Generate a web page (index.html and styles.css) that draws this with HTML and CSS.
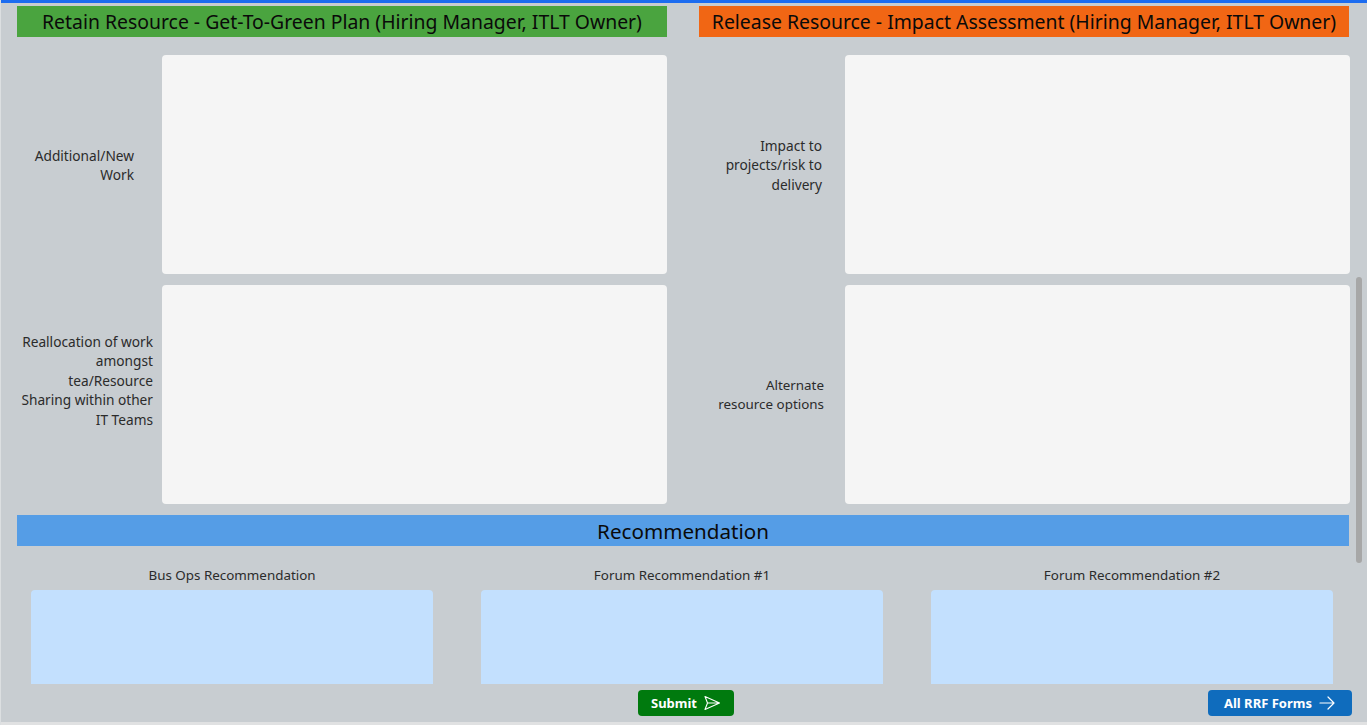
FILE: index.html
```html
<!DOCTYPE html>
<html>
<head>
<meta charset="utf-8">
<link rel="stylesheet" href="styles.css">
</head>
<body>
<div class="page">
  <div class="topbar"></div>
  <div class="columns">
    <section class="col">
      <div class="head head-green">Retain Resource - Get-To-Green Plan (Hiring Manager, ITLT Owner)</div>
      <div class="row">
        <div class="label l1">Additional/New<br>Work</div>
        <div class="box"></div>
      </div>
      <div class="row">
        <div class="label l2">Reallocation of work<br>amongst<br>tea/Resource<br>Sharing within other<br>IT Teams</div>
        <div class="box"></div>
      </div>
    </section>
    <section class="col">
      <div class="head head-orange">Release Resource - Impact Assessment (Hiring Manager, ITLT Owner)</div>
      <div class="row">
        <div class="label r1">Impact to<br>projects/risk to<br>delivery</div>
        <div class="box"></div>
      </div>
      <div class="row">
        <div class="label r2">Alternate<br>resource options</div>
        <div class="box"></div>
      </div>
    </section>
  </div>
  <div class="rec-bar">Recommendation</div>
  <div class="recs">
    <div class="rec">
      <div class="rec-label">Bus Ops Recommendation</div>
      <div class="rec-box"></div>
    </div>
    <div class="rec">
      <div class="rec-label">Forum Recommendation #1</div>
      <div class="rec-box"></div>
    </div>
    <div class="rec">
      <div class="rec-label">Forum Recommendation #2</div>
      <div class="rec-box"></div>
    </div>
  </div>
  <div class="actions">
    <button class="btn btn-submit">Submit
      <svg width="18" height="18" viewBox="0 0 18 18" fill="none" stroke="#fff" stroke-width="1.1" stroke-linejoin="round"><path d="M2 2.5 L16.5 9 L2 15.5 L4.5 9 Z M4.5 9 H16.5"/></svg>
    </button>
    <button class="btn btn-all">All RRF Forms
      <svg width="18" height="18" viewBox="0 0 18 18" fill="none" stroke="#fff" stroke-width="1.2" stroke-linecap="round" stroke-linejoin="round"><path d="M2 9 H16 M10 3 L16 9 L10 15"/></svg>
    </button>
  </div>
  <div class="scrollbar"></div>
  <div class="bottomline"></div>
</div>
</body>
</html>
```
FILE: styles.css
```css
* { box-sizing: border-box; }
html, body { margin: 0; padding: 0; }
body {
  font-family: "Noto Sans", "Open Sans", sans-serif;
  background: #c8cdd1;
  color: #000;
}
.page {
  position: relative;
  width: 1367px;
  height: 725px;
  overflow: hidden;
  background: #c8cdd1;
  border-left: 1px solid #dcdfe1;
}
.topbar {
  height: 3px;
  background: #1c6cf0;
}
.columns {
  display: flex;
  gap: 32px;
  padding: 3px 0 0 16px;
}
.col {
  width: 650px;
  display: flex;
  flex-direction: column;
}
.col:last-child .box { margin-right: -1px; }
.head {
  height: 31px;
  line-height: 32px;
  text-align: center;
  font-size: 19.4px;
  color: #0a0a0a;
  white-space: nowrap;
}
.head-green { background: #4aa43f; }
.head-orange { background: #f16614; }
.row {
  display: flex;
  justify-content: flex-end;
  align-items: center;
  margin-top: 11px;
}
.col .row:nth-child(2) { margin-top: 18px; }
.label {
  font-size: 13.7px;
  line-height: 19.5px;
  color: #2b2b2b;
  text-align: right;
  padding-top: 1px;
}
.l1 { margin-right: 28px; }
.l2 { margin-right: 9px; margin-bottom: 29px; }
.r1 { margin-right: 23px; }
.r2 { margin-right: 21px; font-size: 13.4px; }
.box {
  width: 505px;
  height: 219px;
  background: #f5f5f5;
  border-radius: 4px;
}
.rec-bar {
  margin: 11px 0 0 16px;
  width: 1332px;
  height: 31px;
  line-height: 32px;
  background: #559de6;
  text-align: center;
  font-size: 20.6px;
  color: #0a0a0a;
}
.recs {
  display: flex;
  gap: 48px;
  padding-left: 30px;
  margin-top: 19px;
}
.rec {
  width: 402px;
  display: flex;
  flex-direction: column;
  align-items: center;
}
.rec-label {
  font-size: 13.4px;
  line-height: 20px;
  color: #2b2b2b;
  height: 25px;
}
.rec-box {
  width: 402px;
  height: 94px;
  background: #c3e0fe;
  border-radius: 4px 4px 0 0;
}
.actions {
  position: relative;
  height: 26px;
  margin-top: 6px;
}
.btn {
  position: absolute;
  top: 0;
  height: 26px;
  border: none;
  border-radius: 4px;
  color: #fff;
  font-family: "Noto Sans", "Open Sans", sans-serif;
  font-weight: 700;
  font-size: 13px;
  display: flex;
  align-items: center;
  justify-content: center;
  gap: 6px;
  padding: 0;
}
.btn-submit { left: 637px; width: 96px; background: #007a0e; }
.btn-all { left: 1207px; width: 144px; background: #0f6cbd; }
.scrollbar {
  position: absolute;
  left: 1355px;
  top: 277px;
  width: 6px;
  height: 286px;
  border-radius: 3px;
  background: #a7a7a7;
}
.bottomline {
  position: absolute;
  left: 0;
  right: 0;
  bottom: 0;
  height: 3px;
  background: #e0e1e2;
}
```
